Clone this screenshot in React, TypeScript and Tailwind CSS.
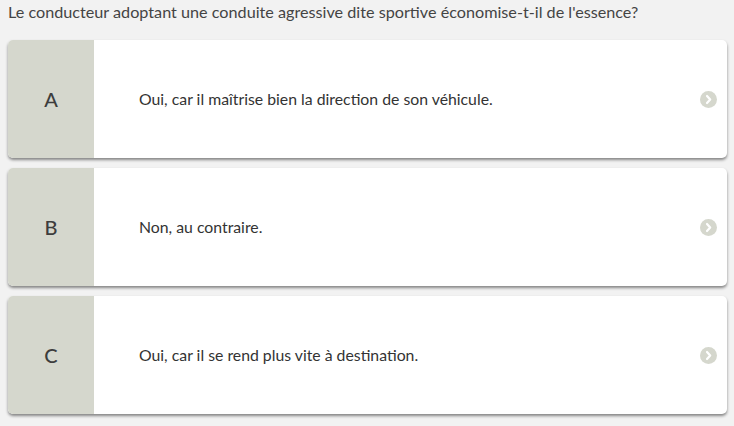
import React from "react";

const answers = [
  { letter: "A", text: "Oui, car il maîtrise bien la direction de son véhicule." },
  { letter: "B", text: "Non, au contraire." },
  { letter: "C", text: "Oui, car il se rend plus vite à destination." },
];

export default function App() {
  return (
    <div
      className="w-[734px] h-[426px] bg-[#f2f2f2] overflow-hidden"
      style={{ fontFamily: "Lato, 'Open Sans', sans-serif" }}
    >
      <div className="pl-[8px] pt-[1px] text-[16.2px] leading-[22px] text-[#444]">
        Le conducteur adoptant une conduite agressive dite sportive économise-t-il de l'essence?
      </div>
      <div className="flex flex-col gap-[10px] pl-[8px] pr-[7px] pt-[17px]">
        {answers.map((a) => (
          <div
            key={a.letter}
            className="flex h-[118px] bg-white rounded-[5px] overflow-hidden shadow-[0_2px_3px_rgba(0,0,0,0.45)]"
          >
            <div className="w-[86px] shrink-0 bg-[#d5d7cd] flex items-center justify-center text-[20px] font-medium text-[#3d3d3d]">
              {a.letter}
            </div>
            <div className="flex-1 flex items-center pl-[45px] text-[15.8px] text-[#333]">
              {a.text}
            </div>
            <div className="flex items-center pr-[10px]">
              <svg width="17" height="17" viewBox="0 0 17 17">
                <circle cx="8.5" cy="8.5" r="8.5" fill="#d5d7cd" />
                <path d="M7 5 L10.2 8.5 L7 12" stroke="white" strokeWidth="2.2" fill="none" strokeLinecap="round" strokeLinejoin="round" />
              </svg>
            </div>
          </div>
        ))}
      </div>
    </div>
  );
}
